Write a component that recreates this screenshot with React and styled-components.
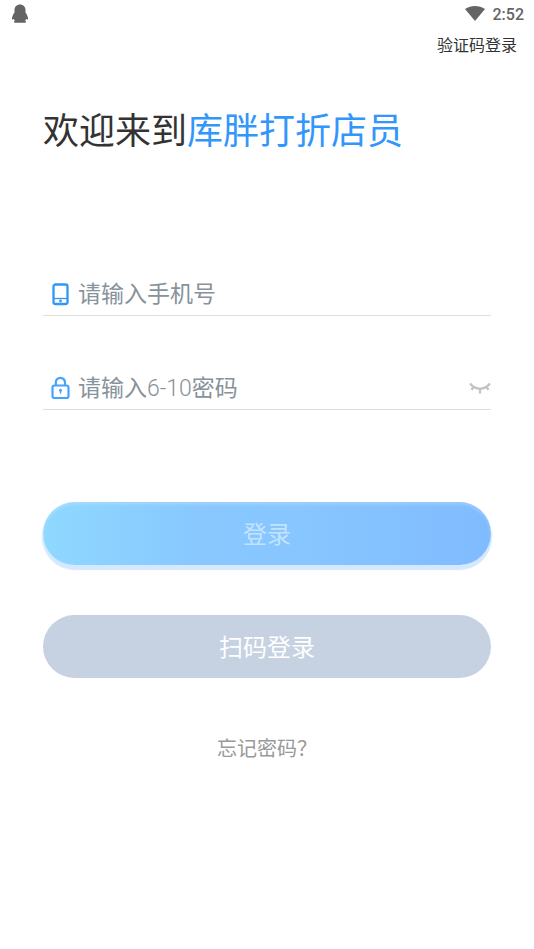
import React, { useState } from "react";
import styled, { createGlobalStyle } from "styled-components";

const GlobalStyle = createGlobalStyle`
  *, *::before, *::after { box-sizing: border-box; }
  body {
    margin: 0;
    background: #fff;
    font-family: Roboto, "Noto Sans CJK SC", sans-serif;
    color: #333;
  }
  button, input { font: inherit; }
`;

const Page = styled.div`
  display: flex;
  flex-direction: column;
  min-height: 100vh;
`;

const StatusBar = styled.header`
  display: flex;
  align-items: center;
  justify-content: space-between;
  height: 28px;
  padding: 0 10px 0 11px;
  color: #646464;
`;

const StatusGroup = styled.div`
  display: flex;
  align-items: center;
  gap: 8px;
`;

const Clock = styled.time`
  padding-top: 2px;
  font-size: 16px;
  line-height: 20px;
  font-weight: 500;
`;

const TopBar = styled.nav`
  display: flex;
  justify-content: flex-end;
  padding: 6px 17px 0;
`;

const TextLink = styled.a`
  color: ${(p) => p.$color};
  font-size: ${(p) => p.$size}px;
  line-height: 24px;
  text-decoration: none;
`;

const Main = styled.main`
  display: flex;
  flex-direction: column;
  padding: 50px 43px 0;
`;

const Title = styled.h1`
  margin: 0;
  font-size: 36px;
  line-height: 48px;
  font-weight: 400;
`;

const Brand = styled.span`
  color: #3296fa;
`;

const Form = styled.form`
  display: flex;
  flex-direction: column;
  margin-top: 115px;
`;

const Fields = styled.div`
  display: flex;
  flex-direction: column;
  gap: 49px;
`;

const Field = styled.label`
  display: flex;
  align-items: center;
  height: 45px;
  padding: 2px 0 0 7px;
  border-bottom: 1px solid #dcdee0;
`;

const Input = styled.input`
  flex: 1;
  min-width: 0;
  height: 42px;
  margin-left: 8px;
  padding: 0;
  border: 0;
  outline: 0;
  background: transparent;
  color: #333;
  font-size: 23px;
  font-family: "Roboto Light", "Noto Sans CJK SC", sans-serif;

  &::placeholder {
    color: #87929a;
    opacity: 1;
  }
`;

const IconButton = styled.button`
  display: flex;
  padding: 0;
  border: 0;
  background: none;
  cursor: pointer;
`;

const Actions = styled.div`
  display: flex;
  flex-direction: column;
  gap: 50px;
  margin-top: 92px;
`;

const PillButton = styled.button`
  height: 63px;
  padding: 2px 0 0;
  border: 0;
  border-radius: 32px;
  background: #c6d2e1;
  color: #fff;
  font-size: 24px;
  line-height: 36px;
  cursor: pointer;
`;

const LoginButton = styled(PillButton)`
  background: linear-gradient(90deg, #8fd8ff 0%, #88c8ff 34%, #87c6ff 58%, #80bbff 100%);
  color: #c3e3ff;
  box-shadow: 0 5px 1px #d5e8fd, 0 3px 2px 1px #d5e8fd, inset 0 3px 3px rgba(255, 255, 255, 0.18);
`;

const Footer = styled.footer`
  display: flex;
  justify-content: center;
  margin-top: 59px;
`;

function PenguinIcon() {
  return (
    <svg width="18" height="20" viewBox="0 0 18 20" fill="currentColor" aria-hidden="true">
      <path d="M9 .5C5.700 .5 3.500 2.800 3.500 6.200v2.200C2 10.500 1 12.600 1 14.600c0 1.200.6 1.400 1.700.3.300.6.700 1.100 1.200 1.500-1.400.8-1 2.400.6 2.400h9c1.600 0 2-1.600.6-2.400.5-.4.900-.9 1.200-1.500 1.100 1.100 1.700.9 1.700-.3 0-2-1-4.100-2.500-6.200V6.200C14.500 2.800 12.300.5 9 .5z" />
    </svg>
  );
}

function WifiIcon() {
  return (
    <svg width="20" height="16" viewBox="0 0 20 16" fill="currentColor" aria-hidden="true">
      <path d="M0 3C6 -1 14 -1 20 3L10 15z" />
    </svg>
  );
}

function PhoneIcon() {
  return (
    <svg width="20" height="24" viewBox="0 0 20 24" fill="none" stroke="#3296fa" aria-hidden="true">
      <rect x="3.500" y="2.500" width="14" height="19.500" rx="2" strokeWidth="2.300" />
      <path d="M3.500 16.500h14" strokeWidth="1.300" />
      <circle cx="10.500" cy="19" r="1.400" fill="#3296fa" stroke="none" />
    </svg>
  );
}

function LockIcon() {
  return (
    <svg width="20" height="24" viewBox="0 0 20 24" fill="none" stroke="#46a2ff" strokeWidth="2.200" aria-hidden="true">
      <rect x="2.500" y="9.500" width="16" height="12.500" rx="2" />
      <path d="M5.800 9V6.400a4.600 4.600 0 0 1 9.200 0V9" />
      <circle cx="10.500" cy="14.300" r="1.500" fill="#46a2ff" stroke="none" />
      <path d="M10.500 14.500v3.200" strokeWidth="1.300" />
    </svg>
  );
}

function ClosedEyeIcon() {
  return (
    <svg width="22" height="14" viewBox="0 0 22 14" fill="none" stroke="#c2c2c2" strokeWidth="2.200" aria-hidden="true">
      <path d="M1 2.500C6.500 9.300 15.500 9.300 21 2.500M4.500 5.800L2.500 9M17.500 5.800l2 3.200M11 8v4.500" />
    </svg>
  );
}

export default function App() {
  const [visible, setVisible] = useState(false);

  return (
    <Page>
      <GlobalStyle />
      <StatusBar>
        <PenguinIcon />
        <StatusGroup>
          <WifiIcon />
          <Clock>2:52</Clock>
        </StatusGroup>
      </StatusBar>
      <TopBar>
        <TextLink href="#code" $size={16} $color="#333">验证码登录</TextLink>
      </TopBar>
      <Main>
        <Title>欢迎来到<Brand>库胖打折店员</Brand></Title>
        <Form onSubmit={(e) => e.preventDefault()}>
          <Fields>
            <Field>
              <PhoneIcon />
              <Input type="tel" aria-label="手机号" placeholder="请输入手机号" />
            </Field>
            <Field>
              <LockIcon />
              <Input type={visible ? "text" : "password"} aria-label="密码" placeholder="请输入6-10密码" />
              <IconButton type="button" aria-label="显示密码" onClick={() => setVisible(!visible)}>
                <ClosedEyeIcon />
              </IconButton>
            </Field>
          </Fields>
          <Actions>
            <LoginButton type="submit">登录</LoginButton>
            <PillButton type="button">扫码登录</PillButton>
          </Actions>
        </Form>
        <Footer>
          <TextLink href="#forgot" $size={20} $color="#999">忘记密码？</TextLink>
        </Footer>
      </Main>
    </Page>
  );
}
